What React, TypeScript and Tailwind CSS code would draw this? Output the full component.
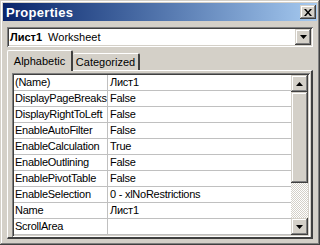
import React from "react";

const rows: [string, string][] = [
  ["(Name)", "Лист1"],
  ["DisplayPageBreaks", "False"],
  ["DisplayRightToLeft", "False"],
  ["EnableAutoFilter", "False"],
  ["EnableCalculation", "True"],
  ["EnableOutlining", "False"],
  ["EnablePivotTable", "False"],
  ["EnableSelection", "0 - xlNoRestrictions"],
  ["Name", "Лист1"],
  ["ScrollArea", ""],
];

const raised =
  "shadow-[inset_-1px_-1px_#404040,inset_1px_1px_#d4d0c8,inset_-2px_-2px_#808080,inset_2px_2px_#fff]";
const sunken =
  "shadow-[inset_1px_1px_#808080,inset_-1px_-1px_#fff,inset_2px_2px_#404040,inset_-2px_-2px_#d4d0c8]";

function Arrow({ up }: { up?: boolean }) {
  return (
    <svg width="7" height="4" viewBox="0 0 7 4">
      <path d={up ? "M3.5 0L7 4H0z" : "M0 0h7L3.5 4z"} fill="#000" />
    </svg>
  );
}

export default function App() {
  return (
    <div
      className={`w-[320px] h-[245px] bg-[#d4d0c8] p-[3px] flex flex-col overflow-hidden ${raised}`}
      style={{ fontFamily: '"Liberation Sans", "Noto Sans", sans-serif' }}
    >
      {/* Title bar */}
      <div className="h-[18px] flex items-center justify-between pl-[3px] pr-[1px] bg-linear-to-r from-[#0a246a] to-[#a6caf0]">
        <span className="text-white font-bold text-[13px] leading-none tracking-[0.3px]">Properties</span>
        <div className={`w-[16px] h-[14px] bg-[#d4d0c8] flex items-center justify-center ${raised}`}>
          <svg width="8" height="7" viewBox="0 0 8 7">
            <path d="M0 0h2l2 2.5L6 0h2L5 3.5 8 7H6L4 4.5 2 7H0l3-3.5z" fill="#000" />
          </svg>
        </div>
      </div>

      <div className="flex-1 flex flex-col px-[4px] text-[11px] text-black">
        {/* Object combo */}
        <div className={`mt-[6px] h-[20px] bg-white flex items-center p-[2px] ${sunken}`}>
          <span className="pl-[1px] flex-1 leading-none">
            <b>Лист1</b>
            <span className="ml-[6px]">Worksheet</span>
          </span>
          <div className={`w-[16px] h-[16px] bg-[#d4d0c8] flex items-center justify-center ${raised}`}>
            <Arrow />
          </div>
        </div>

        {/* Tabs */}
        <div className="mt-[3px] flex items-end h-[20px] relative z-10">
          <div className="h-[21px] w-[66px] bg-[#d4d0c8] border-l border-t border-white border-r-2 border-r-[#404040] rounded-t-[2px] flex items-center justify-center mb-[-1px]">
            Alphabetic
          </div>
          <div className="h-[17px] w-[67px] bg-[#d4d0c8] border-t border-white border-r-2 border-r-[#404040] rounded-t-[2px] flex items-center justify-center">
            Categorized
          </div>
        </div>

        {/* Panel */}
        <div className="h-[169px] w-[306px] border-l border-t border-white border-r-2 border-b-2 border-r-[#404040] border-b-[#404040] pl-[4px] pt-[2px]">
          <div className={`w-[298px] h-[164px] p-[2px] bg-white flex ${sunken}`}>
            <div className="w-[277px] flex flex-col tracking-[-0.25px]">
              {rows.map(([k, v]) => (
                <div key={k} className="h-[16px] flex border-b border-[#c0c0c0]">
                  <div className="w-[94px] pl-[1px] border-r border-[#c0c0c0] leading-[15px] whitespace-nowrap overflow-hidden">
                    {k}
                  </div>
                  <div className="flex-1 pl-[2px] leading-[15px] whitespace-nowrap">{v}</div>
                </div>
              ))}
            </div>
            <div className="w-[17px] flex flex-col">
              <div className={`h-[17px] bg-[#d4d0c8] flex items-center justify-center ${raised}`}>
                <Arrow up />
              </div>
              <div className={`h-[91px] bg-[#d4d0c8] ${raised}`} />
              <div className="flex-1 bg-[repeating-conic-gradient(#fff_0%_25%,#d4d0c8_0%_50%)] bg-[length:2px_2px]" />
              <div className={`h-[17px] bg-[#d4d0c8] flex items-center justify-center ${raised}`}>
                <Arrow />
              </div>
            </div>
          </div>
        </div>
      </div>
    </div>
  );
}
